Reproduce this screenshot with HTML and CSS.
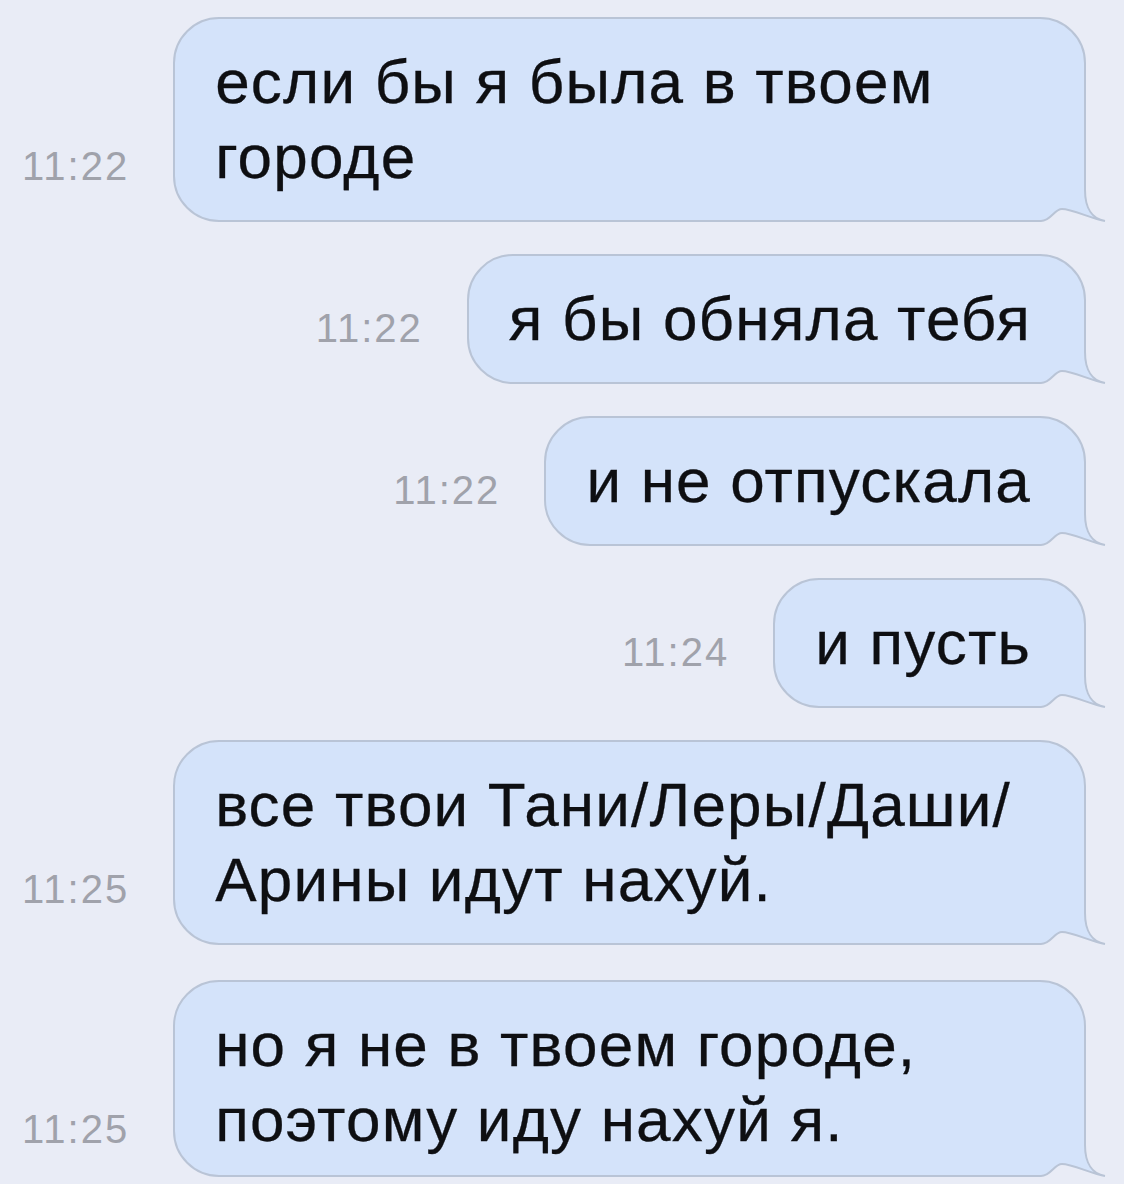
FILE: index.html
```html
<!DOCTYPE html>
<html lang="ru">
<head>
<meta charset="utf-8">
<title>Сообщения</title>
<link rel="stylesheet" href="styles.css">
</head>
<body>
<main class="chat">

  <div class="row">
    <span class="time">11:22</span>
    <div class="bubble bubble-wide">если бы я была в твоем<br>городе
      <svg class="tail" viewBox="0 0 72 50" width="72" height="50" aria-hidden="true">
        <rect class="tail-bg" x="0" y="0" width="72" height="50"/>
        <path class="tail-fill" d="M0,0 L48,0 L48,15 C48,34 56,44 68,46 C55,44 35,34 25,34 C17,34 14,46 4,46 L0,46 Z"/>
        <path class="tail-line" d="M48,0 L48,15 C48,34 56,44 68,46 C55,44 35,34 25,34 C17,34 14,46 4,46 L0,46"/>
      </svg>
    </div>
  </div>

  <div class="row">
    <span class="time">11:22</span>
    <div class="bubble">я бы обняла тебя
      <svg class="tail" viewBox="0 0 72 50" width="72" height="50" aria-hidden="true">
        <rect class="tail-bg" x="0" y="0" width="72" height="50"/>
        <path class="tail-fill" d="M0,0 L48,0 L48,15 C48,34 56,44 68,46 C55,44 35,34 25,34 C17,34 14,46 4,46 L0,46 Z"/>
        <path class="tail-line" d="M48,0 L48,15 C48,34 56,44 68,46 C55,44 35,34 25,34 C17,34 14,46 4,46 L0,46"/>
      </svg>
    </div>
  </div>

  <div class="row">
    <span class="time">11:22</span>
    <div class="bubble">и не отпускала
      <svg class="tail" viewBox="0 0 72 50" width="72" height="50" aria-hidden="true">
        <rect class="tail-bg" x="0" y="0" width="72" height="50"/>
        <path class="tail-fill" d="M0,0 L48,0 L48,15 C48,34 56,44 68,46 C55,44 35,34 25,34 C17,34 14,46 4,46 L0,46 Z"/>
        <path class="tail-line" d="M48,0 L48,15 C48,34 56,44 68,46 C55,44 35,34 25,34 C17,34 14,46 4,46 L0,46"/>
      </svg>
    </div>
  </div>

  <div class="row">
    <span class="time">11:24</span>
    <div class="bubble">и пусть
      <svg class="tail" viewBox="0 0 72 50" width="72" height="50" aria-hidden="true">
        <rect class="tail-bg" x="0" y="0" width="72" height="50"/>
        <path class="tail-fill" d="M0,0 L48,0 L48,15 C48,34 56,44 68,46 C55,44 35,34 25,34 C17,34 14,46 4,46 L0,46 Z"/>
        <path class="tail-line" d="M48,0 L48,15 C48,34 56,44 68,46 C55,44 35,34 25,34 C17,34 14,46 4,46 L0,46"/>
      </svg>
    </div>
  </div>

  <div class="row">
    <span class="time">11:25</span>
    <div class="bubble bubble-wide">все твои Тани/Леры/Даши/<br>Арины идут нахуй.
      <svg class="tail" viewBox="0 0 72 50" width="72" height="50" aria-hidden="true">
        <rect class="tail-bg" x="0" y="0" width="72" height="50"/>
        <path class="tail-fill" d="M0,0 L48,0 L48,15 C48,34 56,44 68,46 C55,44 35,34 25,34 C17,34 14,46 4,46 L0,46 Z"/>
        <path class="tail-line" d="M48,0 L48,15 C48,34 56,44 68,46 C55,44 35,34 25,34 C17,34 14,46 4,46 L0,46"/>
      </svg>
    </div>
  </div>

  <div class="row row-last">
    <span class="time">11:25</span>
    <div class="bubble bubble-wide">но я не в твоем городе,<br>поэтому иду нахуй я.
      <svg class="tail" viewBox="0 0 72 50" width="72" height="50" aria-hidden="true">
        <rect class="tail-bg" x="0" y="0" width="72" height="50"/>
        <path class="tail-fill" d="M0,0 L48,0 L48,15 C48,34 56,44 68,46 C55,44 35,34 25,34 C17,34 14,46 4,46 L0,46 Z"/>
        <path class="tail-line" d="M48,0 L48,15 C48,34 56,44 68,46 C55,44 35,34 25,34 C17,34 14,46 4,46 L0,46"/>
      </svg>
    </div>
  </div>

</main>
</body>
</html>
```

FILE: styles.css
```css
html,
body {
  margin: 0;
  padding: 0;
  background: #e9ecf6;
}

body {
  font-family: "Liberation Sans", Arial, Helvetica, sans-serif;
  color: #0e0f12;
  overflow: hidden;
}

.chat {
  display: flex;
  flex-direction: column;
  gap: 32px;
  padding: 17px 38px 0 22px;
}

.row {
  display: flex;
  justify-content: flex-end;
  align-items: flex-end;
  gap: 44px;
}

.row-last {
  margin-top: 3px;
}

.time {
  flex: none;
  font-size: 40px;
  letter-spacing: 2px;
  color: #a0a2ab;
  padding-bottom: 33px;
  line-height: normal;
}

.bubble {
  position: relative;
  flex: 0 1 auto;
  min-width: 0;
  box-sizing: border-box;
  padding: 25px 53px 26px 40px;
  font-size: 62px;
  line-height: 75px;
  letter-spacing: 1.2px;
  -webkit-text-stroke: 0.3px #0e0f12;
  background: #d4e3fa;
  border: 2px solid #b9c4d6;
  border-radius: 46px 46px 0 46px;
  white-space: nowrap;
}

.bubble-wide {
  flex: 1 1 0;
}

.row-last .bubble {
  padding-bottom: 18px;
}

.row-last .time {
  padding-bottom: 25px;
}

/* bottom-right speech tail, drawn over the square corner */
.tail {
  position: absolute;
  right: -25px;
  bottom: -5px;
  display: block;
}

.tail-bg {
  fill: #e9ecf6;
}

.tail-fill {
  fill: #d4e3fa;
}

.tail-line {
  fill: none;
  stroke: #b9c4d6;
  stroke-width: 2;
}
```
